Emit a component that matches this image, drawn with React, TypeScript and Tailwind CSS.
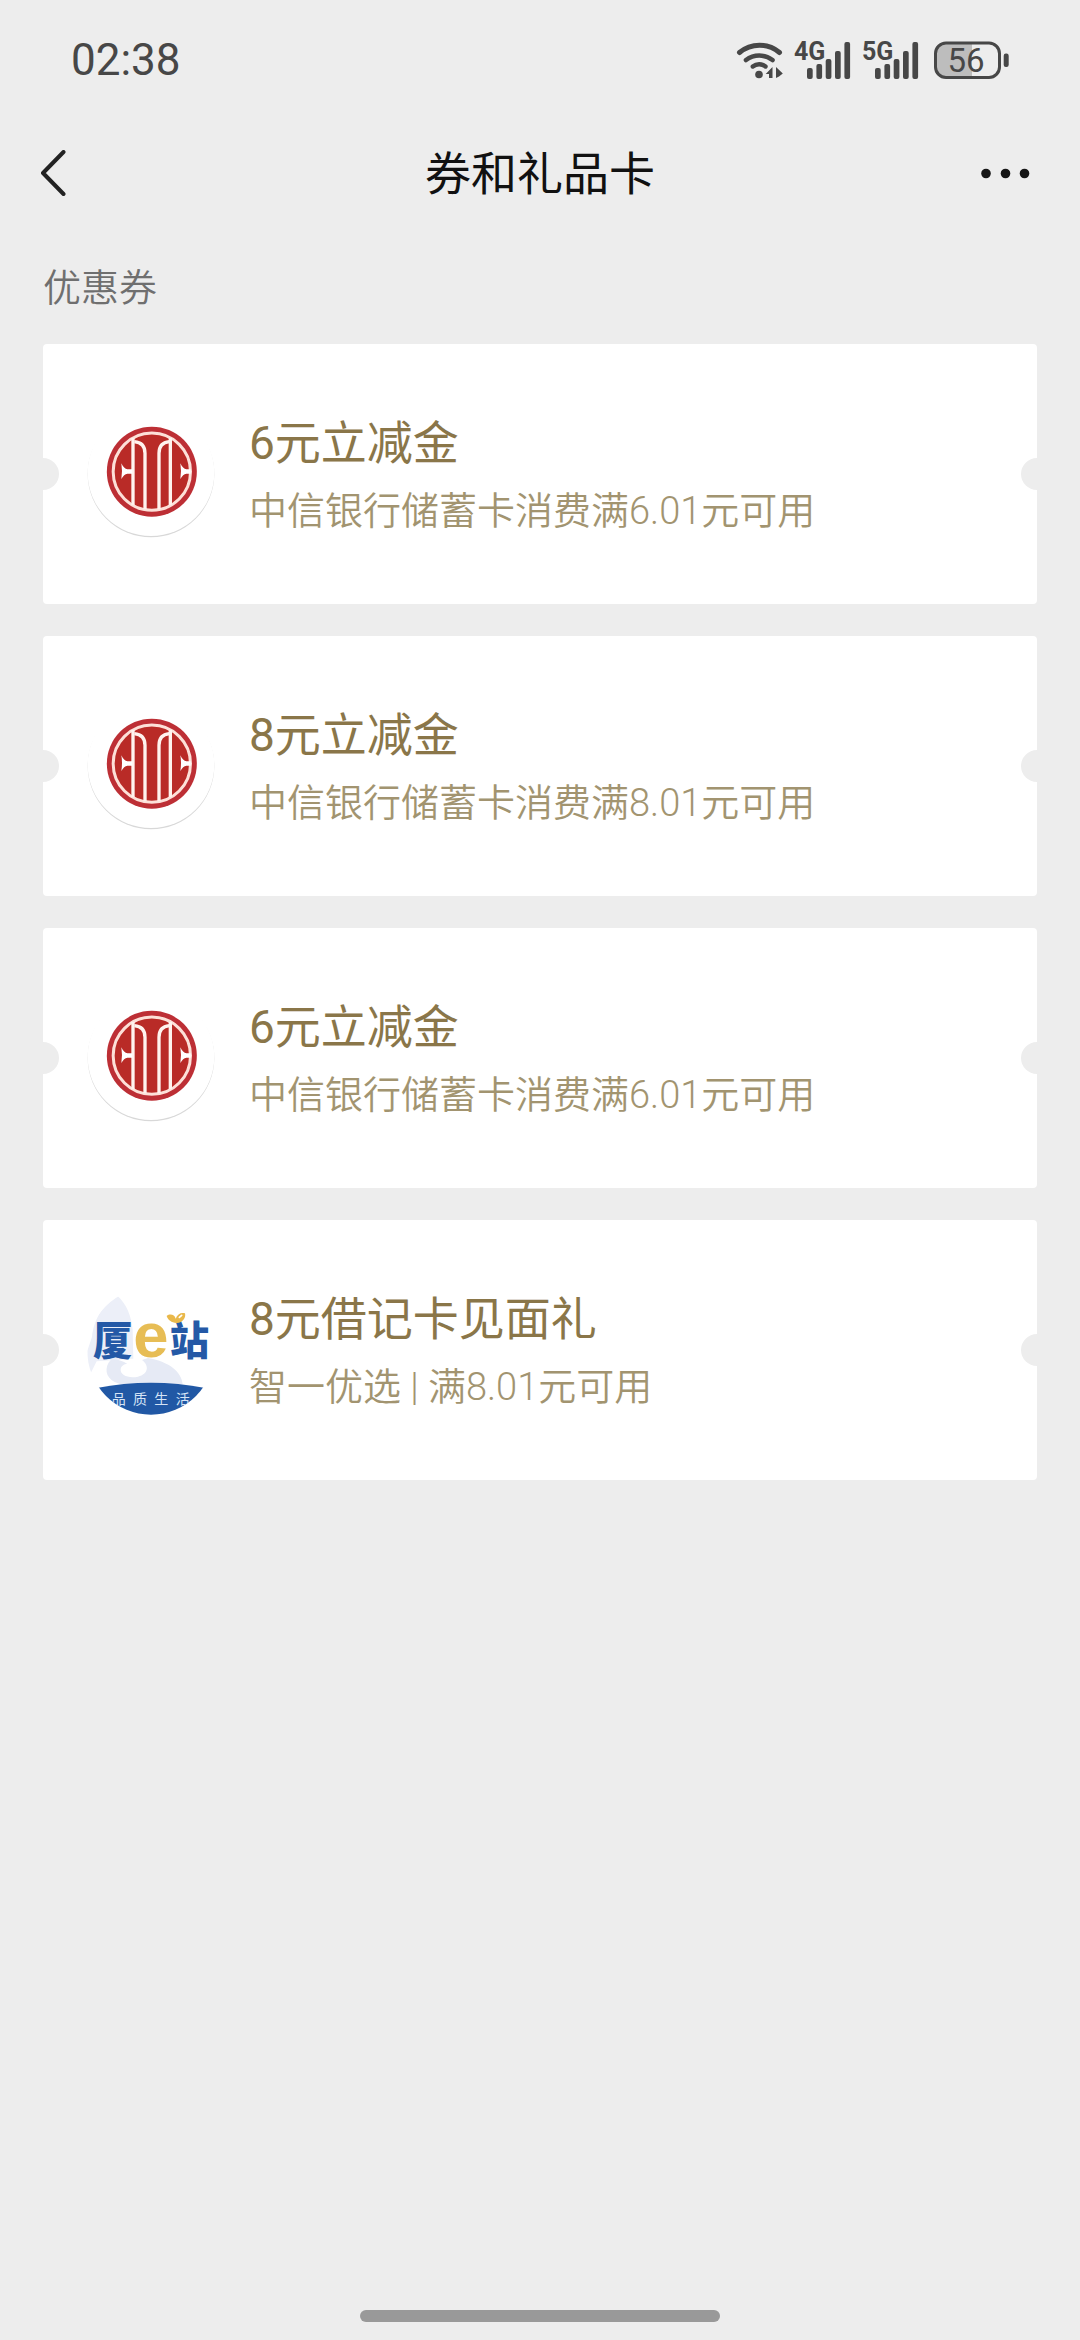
import type { ReactNode } from "react";

const WifiIcon = () => (
  <svg className="h-[38px] w-12" viewBox="0 0 48 38" fill="none" stroke="#474747" strokeLinecap="round">
    <path d="M3.500 11.500A31 31 0 0 1 43.500 11.500" strokeWidth="5" />
    <path d="M10 19A22 22 0 0 1 36.500 19" strokeWidth="4.600" />
    <path d="M16.800 25.500A10 10 0 0 1 29.500 25.500" strokeWidth="4.400" />
    <circle cx="23" cy="33.500" r="3.800" fill="#474747" stroke="none" />
    <path d="M36.500 26V37H33V33H29.700ZM40 26L46.800 32.500L43 35.500L40 37Z" fill="#474747" stroke="none" />
  </svg>
);

const SignalIcon = ({ label }: { label: string }) => (
  <svg className="h-[38px] w-[57px] overflow-visible" viewBox="0 0 57 38" fill="#474747">
    <text x="0" y="19" fontSize="25" fontWeight="700" className="font-['Liberation_Sans_Narrow',Roboto,sans-serif]">
      {label}
    </text>
    <rect x="13" y="27" width="5.700" height="11" rx="2" />
    <rect x="22.400" y="23" width="5.700" height="15" rx="2" />
    <rect x="31.700" y="18" width="5.700" height="20" rx="2" />
    <rect x="41" y="10" width="5.700" height="28" rx="2" />
    <rect x="50.400" y="1" width="5.700" height="37" rx="2" />
  </svg>
);

const BatteryIcon = ({ level }: { level: number }) => (
  <svg className="h-[38px] w-[75px]" viewBox="0 0 75 38">
    <path d="M12 2H38V36H12A10 10 0 0 1 2 26V12A10 10 0 0 1 12 2Z" fill="#bdbdbd" />
    <rect x="1.500" y="2" width="64" height="34.500" rx="10.500" fill="none" stroke="#474747" strokeWidth="3" />
    <rect x="69.700" y="12.500" width="5" height="13.500" rx="2.200" fill="#474747" />
    <text x="32" y="31" textAnchor="middle" fontSize="33" fill="#474747" className="font-[Roboto,sans-serif]">
      {level}
    </text>
  </svg>
);

const CiticLogo = () => (
  <svg className="size-[126px] shrink-0 overflow-visible" viewBox="24 3 378 378">
    <circle cx="213" cy="192" r="190" fill="#d8d8d8" />
    <circle cx="213" cy="188" r="190" fill="#fff" />
    <circle cx="215.500" cy="185" r="135" fill="#bd2f35" />
    <circle cx="215.500" cy="185" r="116" fill="#b92b27" stroke="#fde0d8" strokeWidth="9" />
    <g fill="none" stroke="#fff3ee" strokeWidth="10">
      <path d="M159 84V286M271 84V286" />
      <path d="M163 95C186 97 195 110 195 130V298M268 95C246 97 237 110 237 130V298" />
    </g>
    <path
      d="M124 160Q132 177 142 178H157V191H142Q132 192 124 207Q128 183 124 160ZM301 160Q309 177 319 178H332V191H319Q309 192 301 207Q305 183 301 160Z"
      fill="#fff"
    />
  </svg>
);

const StationLogo = () => (
  <svg className="size-[126px] shrink-0 overflow-visible" viewBox="24 21 378 378">
    <defs>
      <clipPath id="station-disc">
        <circle cx="213" cy="213" r="191" />
      </clipPath>
    </defs>
    <g clipPath="url(#station-disc)">
      <path
        d="M112 47C76 66 42 112 36 170L22 212C20 240 24 264 32 280L50 244L160 236L158 150C154 108 140 72 112 47Z"
        fill="#eceff8"
      />
      <path
        d="M92 240C72 262 76 292 104 306L120 312H308C304 276 270 246 204 234L186 240C208 256 206 282 174 290C146 296 120 286 122 268C123 258 132 252 142 252C126 240 104 236 92 240Z"
        fill="#e6eaf5"
      />
      <path d="M50 324Q213 292 376 324V410H50Z" fill="#2158a5" />
      <g fill="#d5e4f6" fontSize="42" className="font-['Noto_Sans_CJK_SC',sans-serif]">
        <text x="95" y="373">品</text>
        <text x="159" y="373">质</text>
        <text x="223" y="373">生</text>
        <text x="287" y="373">活</text>
      </g>
    </g>
    <g fill="#2459a6" fontSize="118" fontWeight="900" className="font-['Noto_Sans_CJK_SC',sans-serif]">
      <text x="39" y="225">厦</text>
      <text x="269" y="225">站</text>
    </g>
    <text x="160" y="230" fontSize="190" fontWeight="700" fill="#e7bd55" className="font-['Liberation_Sans',sans-serif]">
      e
    </text>
    <path
      d="M260 108C270 100 284 104 287 116C292 102 304 96 315 100C319 114 306 130 290 129C274 128 264 120 260 108Z"
      fill="#e9b84a"
    />
    <path d="M298 112L305 106" stroke="#fff" strokeWidth="5" strokeLinecap="round" />
  </svg>
);

type Coupon = { id: number; logo: ReactNode; title: string; text: string };

const coupons: Coupon[] = [
  { id: 1, logo: <CiticLogo />, title: "6元立减金", text: "中信银行储蓄卡消费满6.01元可用" },
  { id: 2, logo: <CiticLogo />, title: "8元立减金", text: "中信银行储蓄卡消费满8.01元可用" },
  { id: 3, logo: <CiticLogo />, title: "6元立减金", text: "中信银行储蓄卡消费满6.01元可用" },
  { id: 4, logo: <StationLogo />, title: "8元借记卡见面礼", text: "智一优选 | 满8.01元可用" },
];

const CouponCard = ({ coupon }: { coupon: Coupon }) => (
  <li className="relative flex min-h-[260px] items-center gap-[35px] overflow-hidden rounded-[4px] bg-white px-[45px]">
    <span className="absolute top-1/2 -left-4 size-8 -translate-y-1/2 rounded-full bg-[#ededed]" />
    <span className="absolute top-1/2 -right-4 size-8 -translate-y-1/2 rounded-full bg-[#ededed]" />
    {coupon.logo}
    <div className="pt-1.5">
      <h3 className="text-[46px] leading-[68px] text-[#8a7649]">{coupon.title}</h3>
      <p className="text-[38px] leading-[68px] font-[350] text-[#a29470]">{coupon.text}</p>
    </div>
  </li>
);

const App = () => {
  return (
    <div className="flex min-h-screen flex-col bg-[#ededed] font-[Roboto,'Noto_Sans_CJK_SC',sans-serif]">
      <div className="flex h-[120px] items-center justify-between px-[71px] text-[#474747]">
        <span className="text-[44px]">02:38</span>
        <div className="flex items-center">
          <WifiIcon />
          <div className="mr-[15px] ml-2.5 flex gap-[11px]">
            <SignalIcon label="4G" />
            <SignalIcon label="5G" />
          </div>
          <BatteryIcon level={56} />
        </div>
      </div>

      <header className="grid h-[108px] grid-cols-[1fr_auto_1fr] items-center px-[38px]">
        <button type="button" aria-label="返回" className="justify-self-start">
          <svg className="h-12 w-7" viewBox="0 0 28 48" fill="none" stroke="#222" strokeWidth="4" strokeLinecap="round" strokeLinejoin="round">
            <path d="M25.500 2L5 23L25.500 44" />
          </svg>
        </button>
        <h1 className="text-[46px] leading-[68px] text-[#111]">券和礼品卡</h1>
        <button type="button" aria-label="更多" className="justify-self-end">
          <svg className="h-12 w-16" viewBox="0 0 64 48" fill="#161616">
            <circle cx="8" cy="23.500" r="4.800" />
            <circle cx="27.500" cy="23.500" r="4.800" />
            <circle cx="46.500" cy="23.500" r="4.800" />
          </svg>
        </button>
      </header>

      <main className="px-[43px]">
        <h2 className="pt-8 pb-7 text-[38px] leading-[56px] font-[350] text-[#6f6f6f]">优惠券</h2>
        <ul className="flex flex-col gap-8">
          {coupons.map((coupon) => (
            <CouponCard key={coupon.id} coupon={coupon} />
          ))}
        </ul>
      </main>

      <div className="mx-auto mt-auto mb-[18px] h-3 w-1/3 rounded-full bg-[#999]" />
    </div>
  );
};

export default App;
